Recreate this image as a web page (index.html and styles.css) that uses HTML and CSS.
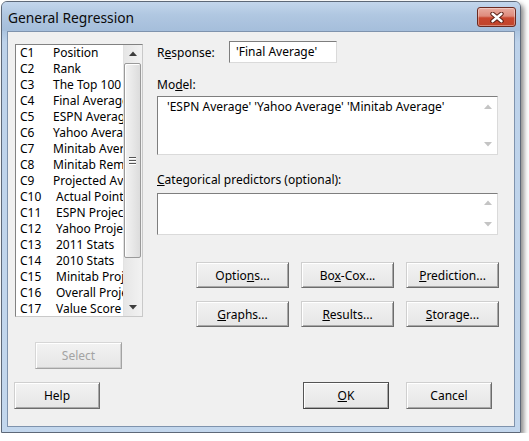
FILE: index.html
```html
<!DOCTYPE html>
<html>
<head>
<meta charset="utf-8">
<title>General Regression</title>
<link rel="stylesheet" href="styles.css">
</head>
<body>
<div class="window">
  <div class="titlebar">
    <span class="title">General Regression</span>
    <div class="close">
      <svg width="14" height="11" viewBox="0 0 14 11">
        <path d="M2.5 1.8 L11.5 9.2 M11.5 1.8 L2.5 9.2" stroke="#5a1f14" stroke-width="4.4" stroke-linecap="round"/>
        <path d="M2.5 1.8 L11.5 9.2 M11.5 1.8 L2.5 9.2" stroke="#ffffff" stroke-width="2.4" stroke-linecap="round"/>
      </svg>
    </div>
  </div>
  <div class="client">
    <div class="main">
      <div class="leftcol">
        <div class="listbox">
          <div class="items">
            <div class="item"><span class="num">C1</span><span class="name">Position</span></div>
            <div class="item"><span class="num">C2</span><span class="name">Rank</span></div>
            <div class="item"><span class="num">C3</span><span class="name">The Top 100</span></div>
            <div class="item"><span class="num">C4</span><span class="name">Final Average</span></div>
            <div class="item"><span class="num">C5</span><span class="name">ESPN Average</span></div>
            <div class="item"><span class="num">C6</span><span class="name">Yahoo Average</span></div>
            <div class="item"><span class="num">C7</span><span class="name">Minitab Average</span></div>
            <div class="item"><span class="num">C8</span><span class="name">Minitab Remaining</span></div>
            <div class="item"><span class="num">C9</span><span class="name">Projected Average</span></div>
            <div class="item"><span class="num wide">C10</span><span class="name">Actual Points</span></div>
            <div class="item"><span class="num wide">C11</span><span class="name">ESPN Projection</span></div>
            <div class="item"><span class="num wide">C12</span><span class="name">Yahoo Projection</span></div>
            <div class="item"><span class="num wide">C13</span><span class="name">2011 Stats</span></div>
            <div class="item"><span class="num wide">C14</span><span class="name">2010 Stats</span></div>
            <div class="item"><span class="num wide">C15</span><span class="name">Minitab Projection</span></div>
            <div class="item"><span class="num wide">C16</span><span class="name">Overall Projection</span></div>
            <div class="item"><span class="num wide">C17</span><span class="name">Value Score</span></div>
          </div>
          <div class="vscroll">
            <div class="arrow">
              <svg width="8" height="5" viewBox="0 0 8 5"><polygon points="0,5 8,5 4,0.5" fill="#3c3c3c"/></svg>
            </div>
            <div class="track">
              <div class="thumb">
                <div class="grip"><i></i><i></i><i></i></div>
              </div>
            </div>
            <div class="arrow">
              <svg width="8" height="5" viewBox="0 0 8 5"><polygon points="0,0 8,0 4,4.5" fill="#3c3c3c"/></svg>
            </div>
          </div>
        </div>
        <button class="btn select" disabled>Select</button>
      </div>
      <div class="rightcol">
        <div class="resp-row">
          <span class="resp-label">R<u>e</u>sponse:</span>
          <div class="field resp-field">'Final Average'</div>
        </div>
        <div class="label model-label">Mo<u>d</u>el:</div>
        <div class="field area model-box">
          <div class="area-text">'ESPN Average' 'Yahoo Average' 'Minitab Average'</div>
          <div class="area-scroll">
            <svg width="8" height="5" viewBox="0 0 8 5"><polygon points="0,5 8,5 4,0.5" fill="#c4c4c4"/></svg>
            <svg width="8" height="5" viewBox="0 0 8 5"><polygon points="0,0 8,0 4,4.5" fill="#c4c4c4"/></svg>
          </div>
        </div>
        <div class="label cat-label"><u>C</u>ategorical predictors (optional):</div>
        <div class="field area cat-box">
          <div class="area-text"></div>
          <div class="area-scroll">
            <svg width="8" height="5" viewBox="0 0 8 5"><polygon points="0,5 8,5 4,0.5" fill="#c4c4c4"/></svg>
            <svg width="8" height="5" viewBox="0 0 8 5"><polygon points="0,0 8,0 4,4.5" fill="#c4c4c4"/></svg>
          </div>
        </div>
        <div class="btn-grid">
          <button class="btn">Optio<u>n</u>s...</button>
          <button class="btn">Bo<u>x</u>-Cox...</button>
          <button class="btn"><u>P</u>rediction...</button>
          <button class="btn"><u>G</u>raphs...</button>
          <button class="btn"><u>R</u>esults...</button>
          <button class="btn"><u>S</u>torage...</button>
        </div>
      </div>
    </div>
    <div class="footer">
      <button class="btn foot">Help</button>
      <button class="btn foot ok"><u>O</u>K</button>
      <button class="btn foot cancel">Cancel</button>
    </div>
  </div>
</div>
</body>
</html>
```
FILE: styles.css
```css
* { box-sizing: border-box; }
html, body { margin: 0; padding: 0; background: #ffffff; }
body {
  font-family: "Noto Sans", "Open Sans", sans-serif;
  font-size: 12px;
  color: #000;
}
u { text-decoration: underline; text-underline-offset: 1px; }

.window {
  margin: 1px 0 0 1px;
  width: 520px;
  height: 432px;
  border: 1px solid #5d6878;
  border-radius: 6px 6px 0 0;
  background: linear-gradient(to bottom, #b6cce5 0px, #adc5e0 30px, #bdd2ea 40px, #c3d7ed 100%);
  padding: 0 5px 5px 5px;
  box-shadow: 3px 3px 5px rgba(0, 0, 0, 0.45);
  display: flex;
  flex-direction: column;
}

.titlebar {
  margin: 0 -5px;
  height: 29px;
  display: flex;
  justify-content: space-between;
  align-items: flex-start;
  border-radius: 5px 5px 0 0;
  background: linear-gradient(to bottom, #c3d6ec 0%, #b0c7e1 45%, #a5bedb 100%);
}
.title {
  padding: 6px 0 0 6px;
  font-size: 13.8px;
  line-height: 20px;
  color: #0b0b0b;
}
.close {
  margin: 5px 4px 0 0;
  width: 39px;
  height: 20px;
  border: 1px solid #6b2a20;
  border-radius: 3px;
  background: linear-gradient(to bottom, #e9aca0 0%, #de8b7c 45%, #c9472f 55%, #c0452c 100%);
  box-shadow: inset 0 0 0 1px rgba(255, 255, 255, 0.35);
  display: flex;
  align-items: center;
  justify-content: center;
}

.client {
  flex: 1;
  border: 1px solid #7f93ad;
  background: #f0f0f0;
  display: flex;
  flex-direction: column;
}

.main {
  display: flex;
  padding-left: 7px;
}
.leftcol {
  width: 128px;
  padding-top: 12px;
  display: flex;
  flex-direction: column;
}

.listbox {
  width: 128px;
  height: 273px;
  background: #fff;
  border: 1px solid;
  border-color: #828282 #c9c9c9 #c9c9c9 #828282;
  display: flex;
}
.items {
  width: 107px;
  overflow: hidden;
  padding-left: 4px;
}
.item {
  display: flex;
  height: 16px;
  line-height: 16px;
  white-space: nowrap;
}
.num { width: 33px; flex: none; }
.num.wide { width: 36px; }
.name { flex: none; }

.vscroll {
  width: 19px;
  display: flex;
  flex-direction: column;
  background: linear-gradient(to right, #e6e6e6, #f2f2f2);
  border-left: 1px solid #e2e2e2;
}
.arrow {
  height: 17px;
  display: flex;
  align-items: center;
  justify-content: center;
  flex: none;
}
.track {
  flex: 1;
  padding-top: 1px;
}
.thumb {
  margin: 0 1px 0 0;
  height: 195px;
  border: 1px solid #9a9a9a;
  border-radius: 2px;
  background: linear-gradient(to right, #f4f4f4 0%, #e8e8e8 50%, #dcdcdc 100%);
  box-shadow: inset 1px 1px 0 #ffffff;
  display: flex;
  align-items: center;
  justify-content: center;
}
.grip {
  display: flex;
  flex-direction: column;
  gap: 2px;
}
.grip i {
  display: block;
  width: 7px;
  height: 1px;
  background: #555;
  box-shadow: 0 1px 0 #fff;
}

.btn {
  font-family: inherit;
  font-size: 12px;
  color: #000;
  padding: 0;
  background: linear-gradient(to bottom, #f2f2f2, #e6e6e6);
  border: 1px solid;
  border-color: #cfcfcf #6c6c6c #6c6c6c #cfcfcf;
  box-shadow: inset 1px 1px 0 #ffffff, inset -1px -1px 0 #a8a8a8;
  border-radius: 0;
  text-align: center;
}
.select {
  margin: 25px 0 0 20px;
  width: 87px;
  height: 27px;
  color: #a3a3a3;
  border-color: #d6d6d6 #a3a3a3 #a3a3a3 #d6d6d6;
  box-shadow: inset 1px 1px 0 #ffffff, inset -1px -1px 0 #cfcfcf;
}

.rightcol {
  margin-left: 14px;
  padding-top: 9px;
  width: 341px;
  display: flex;
  flex-direction: column;
}
.resp-row {
  display: flex;
  align-items: center;
  height: 22px;
}
.resp-label { width: 72px; }
.field {
  background: #fff;
  border: 1px solid;
  border-color: #7e7e7e #dadada #dadada #7e7e7e;
}
.resp-field {
  width: 108px;
  height: 22px;
  line-height: 20px;
  padding-left: 6px;
  white-space: nowrap;
}
.label { line-height: 16px; }
.model-label { margin-top: 14px; }
.area {
  display: flex;
  width: 341px;
}
.area-text {
  flex: 1;
  padding: 2px 0 0 9px;
  line-height: 16px;
  white-space: nowrap;
}
.area-scroll {
  width: 17px;
  display: flex;
  flex-direction: column;
  justify-content: space-between;
  align-items: center;
  padding: 7px 1px 7px 0;
}
.model-box { margin-top: 3px; height: 59px; }
.cat-label { margin-top: 17px; }
.cat-box { margin-top: 5px; height: 42px; }
.cat-box .area-scroll { padding: 6px 1px 7px 0; }

.btn-grid {
  margin: 27px 0 0 39px;
  display: grid;
  grid-template-columns: 93px 93px 93px;
  grid-auto-rows: 26px;
  column-gap: 12px;
  row-gap: 13px;
}

.footer {
  display: flex;
  margin-top: 13px;
  padding-left: 6px;
}
.foot { width: 86px; height: 27px; }
.ok {
  margin-left: 203px;
  border-color: #555 #444 #444 #555;
}
.cancel { margin-left: 17px; }
```
